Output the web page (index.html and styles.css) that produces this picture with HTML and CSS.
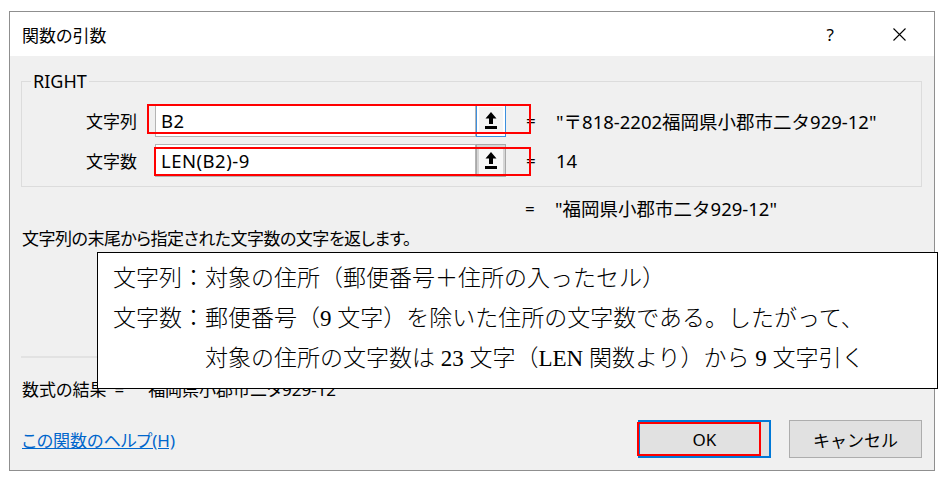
FILE: index.html
```html
<!DOCTYPE html>
<html lang="ja">
<head>
<meta charset="UTF-8" />
<meta name="viewport" content="width=device-width, initial-scale=1.0" />
<title>関数の引数</title>
<link rel="stylesheet" href="styles.css">
</head>
<body>

<div class="dialog">
  <div class="titlebar">
    <span class="title">関数の引数</span>
    <span class="help">?</span>
    <span class="close">
      <svg width="13" height="13" viewBox="0 0 13 13"><path d="M0.5 0.5L12.5 12.5M12.5 0.5L0.5 12.5" stroke="#000" stroke-width="1.1" fill="none"/></svg>
    </span>
  </div>

  <div class="dlg-body">
    <fieldset class="args">
      <legend>RIGHT</legend>

      <div class="arg-row">
        <span class="arg-label">文字列</span>
        <div class="arg-input">B2</div>
        <span class="ref-btn ref-focus">
          <svg width="12" height="17" viewBox="0 0 12 17"><path d="M6 0L11.5 6.5H8V12H4V6.5H0.5Z"/><rect x="0" y="14" width="12" height="3"/></svg>
        </span>
        <span class="eq">=</span>
        <span class="arg-value">"〒818-2202福岡県小郡市二タ929-12"</span>
      </div>

      <div class="arg-row">
        <span class="arg-label">文字数</span>
        <div class="arg-input">LEN(B2)-9</div>
        <span class="ref-btn">
          <svg width="12" height="17" viewBox="0 0 12 17"><path d="M6 0L11.5 6.5H8V12H4V6.5H0.5Z"/><rect x="0" y="14" width="12" height="3"/></svg>
        </span>
        <span class="eq">=</span>
        <span class="arg-value">14</span>
      </div>
    </fieldset>

    <div class="result-row">
      <span class="eq">=</span>
      <span class="arg-value">"福岡県小郡市二タ929-12"</span>
    </div>

    <p class="desc">文字列の末尾から指定された文字数の文字を返します。</p>

    <div class="sep"></div>

    <div class="formula-result">
      <span>数式の結果</span><span class="fr-eq">=</span><span class="fr-value">福岡県小郡市二タ929-12</span>
    </div>

    <div class="footer">
      <a class="help-link" href="#">この関数のヘルプ(H)</a>
      <div class="buttons">
        <button class="btn btn-ok">OK</button>
        <button class="btn">キャンセル</button>
      </div>
    </div>
  </div>
</div>

<!-- 注釈 -->
<div class="mark mark-1"></div>
<div class="mark mark-2"></div>
<div class="mark mark-3"></div>

<div class="note">
  <div>文字列：対象の住所（郵便番号＋住所の入ったセル）</div>
  <div>文字数：郵便番号（9 文字）を除いた住所の文字数である。したがって、</div>
  <div class="note-indent">対象の住所の文字数は 23 文字（LEN 関数より）から 9 文字引く</div>
</div>

</body>
</html>
```

FILE: styles.css
```css
body {
  margin: 0;
  background: #fff;
  color: #000;
  font-family: "Noto Sans", "Noto Sans CJK JP", sans-serif;
  font-size: 17px;
  font-feature-settings: "palt";
  position: relative;
  height: 480px;
  overflow: hidden;
}
.dialog {
  margin: 11px 0 0 9px;
  width: 926px;
  box-sizing: border-box;
  border: 1px solid #8f8f8f;
  background: #f0f0f0;
}
.titlebar {
  height: 44px;
  background: #fff;
  display: flex;
  align-items: center;
  padding-left: 12px;
}
.title {
  flex: 1;
}
.help {
  margin-right: 59px;
}
.close {
  display: flex;
  margin-right: 28px;
}
.dlg-body {
  padding: 15px 12px 12px 11px;
}
.args {
  margin: 0;
  padding: 13px 0 9px 0;
  border: 1px solid #dcdcdc;
}
.args legend {
  margin-left: 9px;
  padding: 0 2px;
  font-size: 18px;
  line-height: 20px;
}
.arg-row {
  display: flex;
  align-items: center;
  height: 33px;
}
.arg-row + .arg-row {
  margin-top: 7px;
}
.arg-label {
  width: 115px;
  margin-right: 18px;
  text-align: right;
}
.arg-input {
  width: 321px;
  height: 33px;
  box-sizing: border-box;
  border: 1px solid #b4b4b4;
  background: #fff;
  padding-left: 5px;
  display: flex;
  align-items: center;
  font-size: 18.5px;
  letter-spacing: .5px;
}
.ref-btn {
  width: 30px;
  height: 33px;
  box-sizing: border-box;
  border: 1px solid #a8a8a8;
  box-shadow: inset 0 0 0 2px #d6d6d6;
  background: #f7f7f7;
  display: flex;
  align-items: center;
  justify-content: center;
}
.ref-focus {
  border-color: #3c8fde;
  box-shadow: inset 0 0 0 2px #fff;
  background: #f4f4f4;
}
.eq {
  margin-left: 20px;
  width: 12px;
}
.arg-value {
  margin-left: 18px;
  font-size: 18.5px;
  font-feature-settings: normal;
}
.result-row {
  margin-top: 11px;
  padding-left: 484px;
  display: flex;
  align-items: center;
  line-height: 22px;
}
.desc {
  margin: 8px 0 0 1px;
  line-height: 22px;
  letter-spacing: -.5px;
}
.sep {
  margin-top: 106px;
  border-top: 2px solid #e2e2e2;
}
.formula-result {
  margin-top: 21px;
  padding-left: 1px;
  line-height: 22px;
}
.fr-eq {
  margin-left: 8px;
}
.fr-value {
  margin-left: 24px;
}
.footer {
  margin-top: 19px;
  padding-left: 1px;
  display: flex;
  align-items: center;
  justify-content: space-between;
}
.help-link {
  color: #0066cc;
  text-decoration: underline;
}
.buttons {
  display: flex;
  gap: 18px;
}
.btn {
  width: 133px;
  height: 38px;
  box-sizing: border-box;
  border: 1px solid #adadad;
  background: #e1e1e1;
  font-family: inherit;
  font-size: 17px;
  color: #000;
  padding: 0;
}
.btn-ok {
  border: 2px solid #0078d7;
}
.mark {
  position: absolute;
  box-sizing: border-box;
  border: 2px solid #f00;
}
.mark-1 {
  left: 147px;
  top: 104px;
  width: 384px;
  height: 30px;
}
.mark-2 {
  left: 154px;
  top: 147px;
  width: 377px;
  height: 29px;
}
.mark-3 {
  left: 637px;
  top: 422px;
  width: 124px;
  height: 34px;
}
.note {
  position: absolute;
  left: 97px;
  top: 252px;
  width: 841px;
  height: 137px;
  box-sizing: border-box;
  border: 1px solid #000;
  background: #fff;
  padding: 6px 0 0 15px;
  font-family: "Liberation Serif", "Noto Sans CJK JP", serif;
  font-feature-settings: normal;
  font-size: 23px;
  font-weight: 300;
  line-height: 40px;
}
.note-indent {
  padding-left: 92px;
}
```
